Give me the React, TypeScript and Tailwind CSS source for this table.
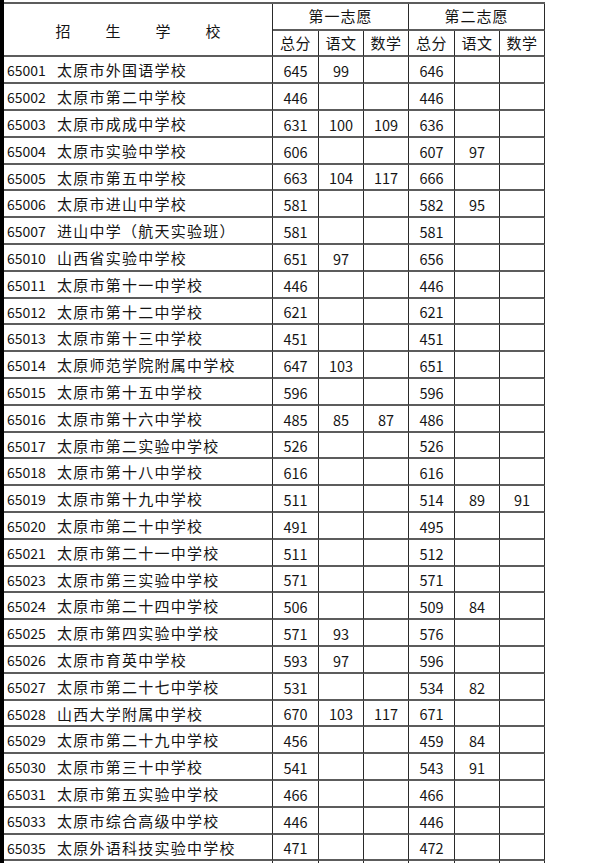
const rows: [string, string, string, string, string, string, string, string][] = [
  ["65001", "太原市外国语学校", "645", "99", "", "646", "", ""],
  ["65002", "太原市第二中学校", "446", "", "", "446", "", ""],
  ["65003", "太原市成成中学校", "631", "100", "109", "636", "", ""],
  ["65004", "太原市实验中学校", "606", "", "", "607", "97", ""],
  ["65005", "太原市第五中学校", "663", "104", "117", "666", "", ""],
  ["65006", "太原市进山中学校", "581", "", "", "582", "95", ""],
  ["65007", "进山中学（航天实验班）", "581", "", "", "581", "", ""],
  ["65010", "山西省实验中学校", "651", "97", "", "656", "", ""],
  ["65011", "太原市第十一中学校", "446", "", "", "446", "", ""],
  ["65012", "太原市第十二中学校", "621", "", "", "621", "", ""],
  ["65013", "太原市第十三中学校", "451", "", "", "451", "", ""],
  ["65014", "太原师范学院附属中学校", "647", "103", "", "651", "", ""],
  ["65015", "太原市第十五中学校", "596", "", "", "596", "", ""],
  ["65016", "太原市第十六中学校", "485", "85", "87", "486", "", ""],
  ["65017", "太原市第二实验中学校", "526", "", "", "526", "", ""],
  ["65018", "太原市第十八中学校", "616", "", "", "616", "", ""],
  ["65019", "太原市第十九中学校", "511", "", "", "514", "89", "91"],
  ["65020", "太原市第二十中学校", "491", "", "", "495", "", ""],
  ["65021", "太原市第二十一中学校", "511", "", "", "512", "", ""],
  ["65023", "太原市第三实验中学校", "571", "", "", "571", "", ""],
  ["65024", "太原市第二十四中学校", "506", "", "", "509", "84", ""],
  ["65025", "太原市第四实验中学校", "571", "93", "", "576", "", ""],
  ["65026", "太原市育英中学校", "593", "97", "", "596", "", ""],
  ["65027", "太原市第二十七中学校", "531", "", "", "534", "82", ""],
  ["65028", "山西大学附属中学校", "670", "103", "117", "671", "", ""],
  ["65029", "太原市第二十九中学校", "456", "", "", "459", "84", ""],
  ["65030", "太原市第三十中学校", "541", "", "", "543", "91", ""],
  ["65031", "太原市第五实验中学校", "466", "", "", "466", "", ""],
  ["65033", "太原市综合高级中学校", "446", "", "", "446", "", ""],
  ["65035", "太原外语科技实验中学校", "471", "", "", "472", "", ""],
]

const cell = "flex items-center justify-center border-b-2 border-r border-b-[#5c5c5c] border-r-[#2a2a2a]"

export default function App() {
  return (
    <div
      className="flex h-[863px] w-[600px] overflow-hidden bg-white text-[14.5px] text-[#141414]"
      style={{ fontFamily: '"Noto Sans CJK SC", "Noto Sans", sans-serif' }}
    >
      <div className="w-[4px] shrink-0 bg-black" />
      <div className="pt-[2px]">
        <div className="grid grid-cols-[269px_46px_45px_45px_46px_45px_45px] border-t-2 border-t-[#5c5c5c]">
          {/* header */}
          <div className={`${cell} row-span-2 h-[53px] gap-[35px] pt-[4px] text-[15px]`}>
            <span>招</span>
            <span>生</span>
            <span>学</span>
            <span>校</span>
          </div>
          <div className={`${cell} col-span-3 h-[27px] text-[15px] tracking-[1px]`}>第一志愿</div>
          <div className={`${cell} col-span-3 h-[27px] text-[15px] tracking-[1px]`}>第二志愿</div>
          {["总分", "语文", "数学", "总分", "语文", "数学"].map((h, i) => (
            <div key={i} className={`${cell} h-[26px] text-[15px] tracking-[0.5px]`}>
              {h}
            </div>
          ))}

          {/* body */}
          {rows.map((r, i) => {
            const h = i % 5 === 4 ? "h-[26px]" : "h-[27px]"
            return (
              <div key={r[0]} className="contents">
                <div className={`${cell} ${h} justify-start pl-[3px] pt-[2px]`}>
                  <span className="w-[50px] shrink-0 text-[14px]">{r[0]}</span>
                  <span className="text-[15px] tracking-[1.25px] whitespace-nowrap">{r[1]}</span>
                </div>
                {r.slice(2).map((v, j) => (
                  <div key={j} className={`${cell} ${h} pt-[2px]`}>
                    {v}
                  </div>
                ))}
              </div>
            )
          })}

          {/* next row, cut off by the window */}
          {[0, 1, 2, 3, 4, 5, 6].map((k) => (
            <div key={k} className={`${cell} h-[27px]`} />
          ))}
        </div>
      </div>
    </div>
  )
}
